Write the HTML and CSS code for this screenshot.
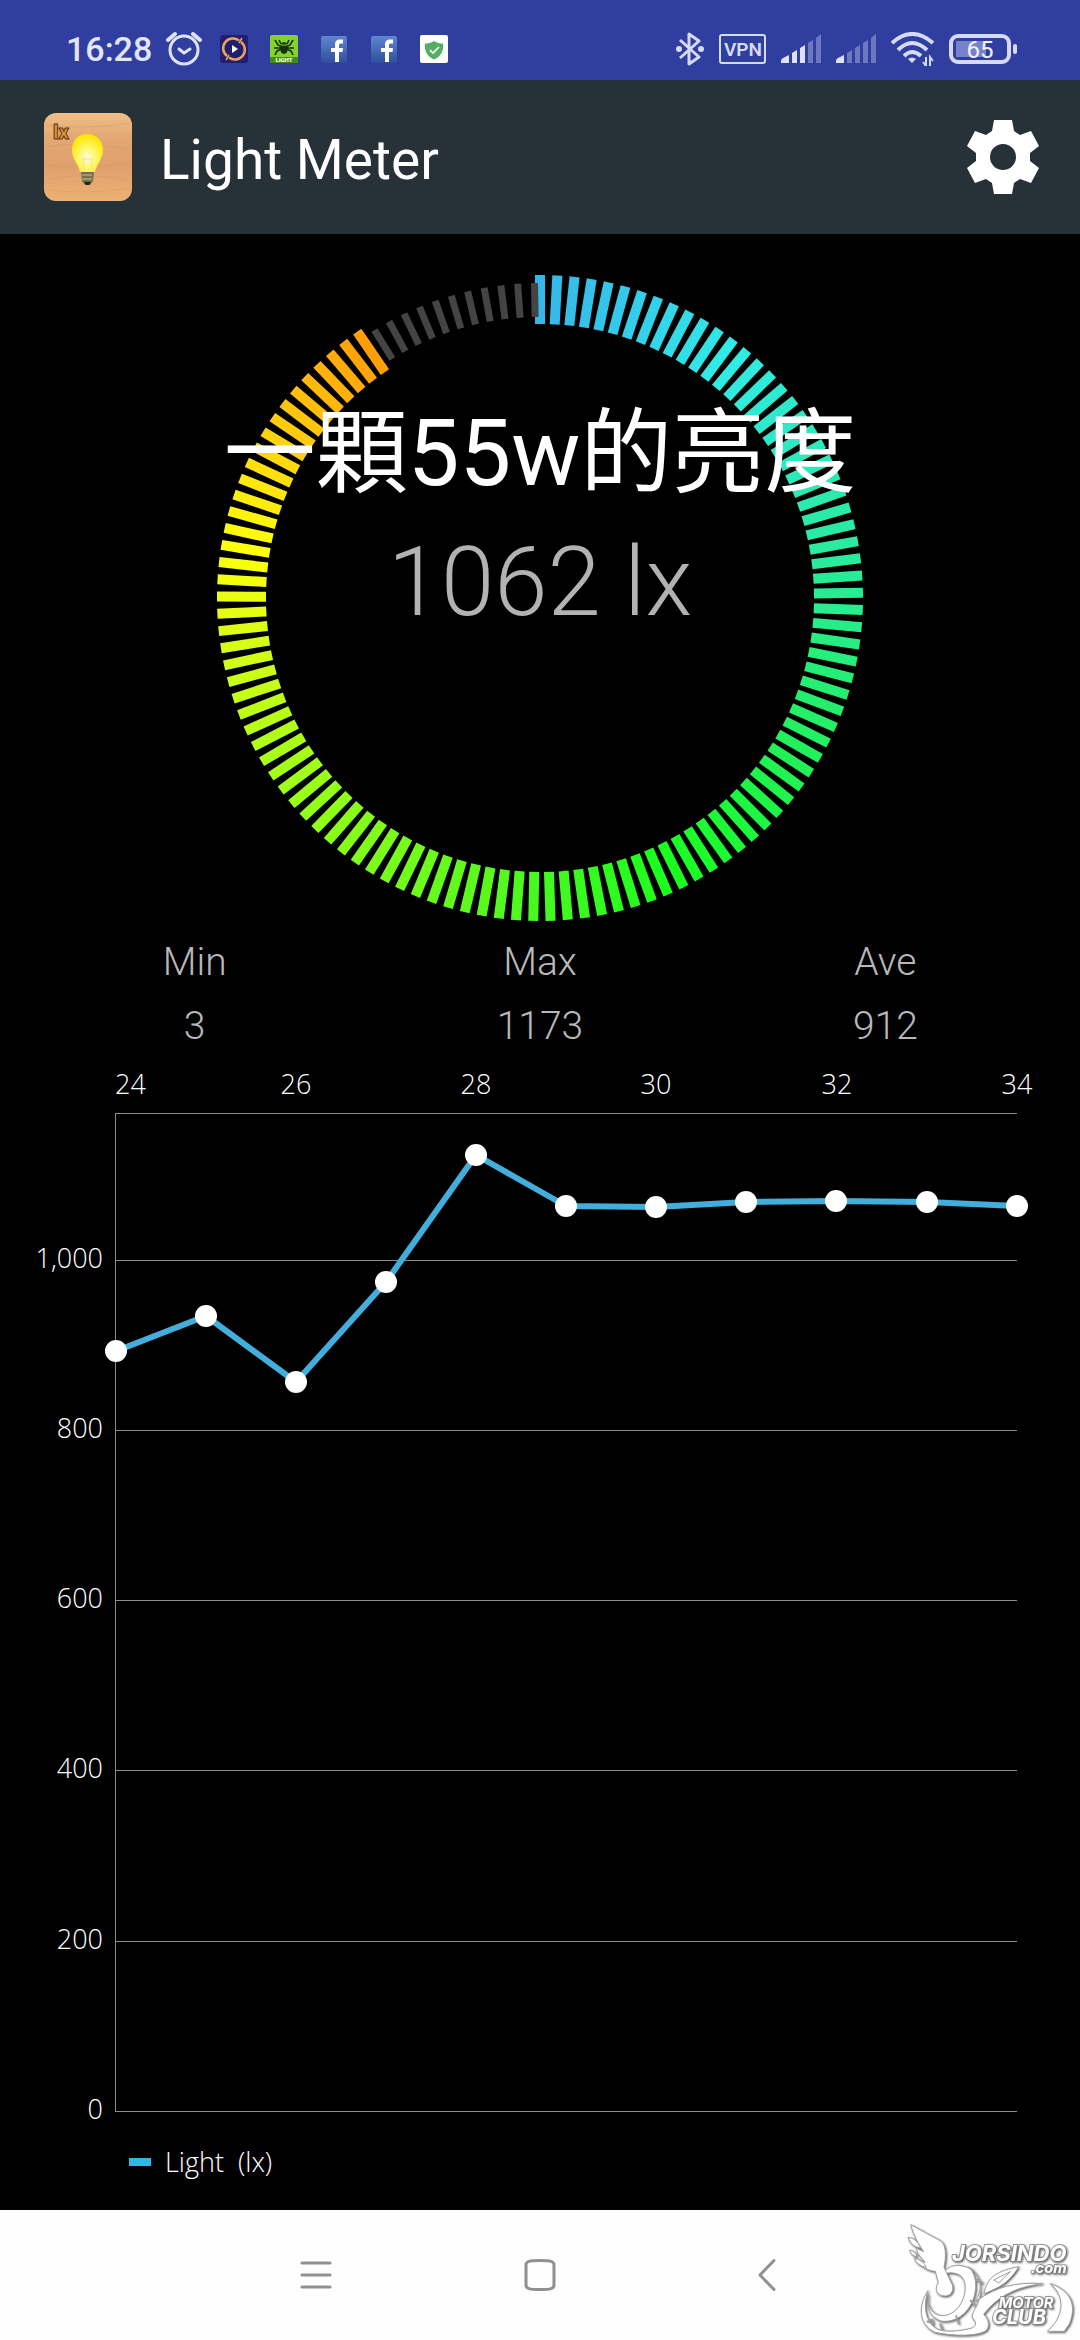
FILE: index.html
```html
<!DOCTYPE html>
<html lang="en">
<head>
<meta charset="utf-8">
<meta name="viewport" content="width=device-width, initial-scale=1">
<title>Light Meter</title>
<link rel="stylesheet" href="styles.css">
</head>
<body>
<div class="screen">
  <div class="status">
    <span class="clock">16:28</span>
    <svg class="alarm" viewBox="0 0 36 36" width="36" height="36" fill="none" stroke="#dfe2fb" stroke-width="3" stroke-linecap="round" stroke-linejoin="round">
      <circle cx="18" cy="19" r="14"/><path d="M13 18l5 4 6-4"/><path d="M2 9l7-6M34 9l-7-6" stroke-width="4"/>
    </svg>
    <div class="notices">
      <svg viewBox="0 0 28 28" width="28" height="28">
        <rect width="28" height="28" rx="3" fill="#22206e"/>
        <path d="M7 21A9.500 9.500 0 0 1 19 5.500M21 7A9.500 9.500 0 0 1 9 22.500" fill="none" stroke="#eda35c" stroke-width="2.500"/>
        <path d="M19 8l3-5M6 25l3-5" stroke="#eda35c" stroke-width="1.500"/><path d="M12 10l6 4-6 4z" fill="#fff"/>
      </svg>
      <svg viewBox="0 0 28 28" width="28" height="28">
        <rect width="28" height="28" rx="2" fill="#86d12d"/><path d="M0 22h28v4a2 2 0 0 1-2 2H2a2 2 0 0 1-2-2z" fill="#3f8c14"/>
        <path d="M12 12L8 10 5 5M16 12l4-2 3-5M12 13H4M16 13h8M12 14l-5 2-2 4M16 14l5 2 2 4M11 9L9 5M17 9l2-4" fill="none" stroke="#12330c" stroke-width="1.600"/>
        <ellipse cx="14" cy="13" rx="4" ry="6" fill="#12330c"/><path d="M11 10h6" stroke="#86d12d"/>
        <text x="14" y="27" class="tiny-label" text-anchor="middle">LIGHT</text>
      </svg>
      <svg viewBox="0 0 28 28" width="28" height="28">
        <defs><linearGradient id="fb" x1="0" y1="0" x2="0" y2="1"><stop offset="0" stop-color="#5f86d0"/><stop offset="1" stop-color="#2f4f9c"/></linearGradient></defs>
        <rect x="1" y="1" width="26" height="27" rx="2" fill="url(#fb)"/>
        <path d="M15 27V17h-4v-4h4v-3c0-4 2-5.500 5-5.500h3v4h-2c-1.500 0-2 .6-2 2V13h4l-.5 4H19v10z" fill="#fff"/>
      </svg>
      <svg viewBox="0 0 28 28" width="28" height="28">
        <rect x="1" y="1" width="26" height="27" rx="2" fill="url(#fb)"/>
        <path d="M15 27V17h-4v-4h4v-3c0-4 2-5.500 5-5.500h3v4h-2c-1.500 0-2 .6-2 2V13h4l-.5 4H19v10z" fill="#fff"/>
      </svg>
      <svg viewBox="0 0 28 28" width="28" height="28">
        <rect width="28" height="28" rx="2" fill="#fff"/>
        <path d="M14 6c3 2 6 2.500 9 2.500 1 7-2 13-9 16C7 21.500 4 15.500 5 8.500 8 8.500 11 8 14 6z" fill="#53ad62"/><path d="M10 15l3 3 6-6" fill="none" stroke="#fff" stroke-width="1.600"/>
      </svg>
    </div>
    <div class="signals">
      <svg viewBox="0 0 28 34" width="28" height="34" fill="none" stroke="#d5daf9" stroke-width="3" stroke-linejoin="round">
        <path d="M4 8l19 17-10 7V2l10 7L4 26"/><circle cx="3" cy="17" r="3" fill="#d5daf9" stroke="none"/><circle cx="25" cy="17" r="3" fill="#d5daf9" stroke="none"/>
      </svg>
      <svg viewBox="0 0 47 30" width="47" height="30">
        <rect x="1" y="1" width="45" height="28" rx="2" fill="none" stroke="#d5daf9" stroke-width="2"/><text x="24" y="22" class="vpn" text-anchor="middle">VPN</text>
      </svg>
      <svg viewBox="0 0 40 30" width="40" height="30" fill="#dde1fb">
        <path d="M0 29v-2q0-2 2-3l6-3v8zM11 29V19l5-3v13zM19 29V14l5-3v18z"/><path d="M27 29V9l5-3v23zM35 29V4l5-4v29z" opacity=".35"/>
      </svg>
      <svg viewBox="0 0 40 30" width="40" height="30" fill="#dde1fb">
        <path d="M0 29v-2q0-2 2-3l6-3v8z"/><path d="M11 29V19l5-3v13zM19 29V14l5-3v18zM27 29V9l5-3v23zM35 29V4l5-4v29z" opacity=".35"/>
      </svg>
      <svg viewBox="0 0 43 34" width="43" height="34" fill="none" stroke="#d5daf9" stroke-width="4">
        <path d="M1 11Q21-7 42 11M7 18Q21 4 36 18M13 24q8-8 17 0"/><path d="M17 27q4-3 8 0l-4 4z" fill="#d5daf9" stroke="none"/>
        <path d="M35 25v9l-3-4M39 34v-9l3 4" stroke-width="2"/>
      </svg>
      <svg viewBox="0 0 68 30" width="68" height="30">
        <rect x="7" y="7" width="30" height="16" fill="#7882ca"/><rect x="2" y="2" width="58" height="26" rx="7" fill="none" stroke="#d5daf9" stroke-width="4"/>
        <rect x="64" y="10" width="4" height="10" rx="2" fill="#d5daf9"/><text x="31" y="24" class="charge" text-anchor="middle">65</text>
      </svg>
    </div>
  </div>

  <header class="appbar">
    <svg class="logo" viewBox="0 0 88 88" width="88" height="88">
      <defs>
        <linearGradient id="wood" x1="0" y1="0" x2="0" y2="1"><stop offset="0" stop-color="#f0bd88"/><stop offset=".3" stop-color="#e2a772"/><stop offset=".6" stop-color="#e0a06d"/><stop offset="1" stop-color="#ecb174"/></linearGradient>
        <radialGradient id="glow" cx=".5" cy=".62" r=".6"><stop offset="0" stop-color="#fffce0"/><stop offset=".45" stop-color="#fff86a"/><stop offset="1" stop-color="#ffe600"/></radialGradient>
      </defs>
      <rect width="88" height="88" rx="12" fill="url(#wood)"/>
      <path d="M3 12q40 5 82-2M2 34q30-6 84 2M2 52q50 5 84-3M3 66q40-7 82 1M4 77q40 5 80-2" fill="none" stroke="#cf8d57" opacity=".3"/>
      <text x="9" y="26" class="logo-text">lx</text>
      <path d="M43 21c11 0 16 8 16 16 0 9-6 13-8 22H36c-2-9-8-13-8-22 0-8 5-16 15-16z" fill="url(#glow)"/>
      <path d="M40 56l-1-11 3 2 2-2 2 2 2-2-1 11" fill="none" stroke="#eee0a0"/>
      <path d="M37 59h13l-1 9-3 4h-5l-3-4z" fill="#74704c"/><path d="M38 62h10M38 66h10" stroke="#c7c296" stroke-width="1"/><path d="M40 69h7l-2 3h-3z" fill="#222"/>
    </svg>
    <h1 class="title">Light Meter</h1>
    <button class="settings" type="button" aria-label="Settings">
      <svg viewBox="-37 -37 74 74" width="74" height="74">
        <path fill="#fff" fill-rule="evenodd" d="M-9-37H9L11-26 17-22 28-26 36-11 27-4V4L36 11 28 26 17 22 11 26 9 37H-9L-11 26-17 22-28 26-36 11-27 4V-4L-36-11-28-26-17-22-11-26ZM13 0A13 13 0 1 0-13 0 13 13 0 1 0 13 0Z"/>
      </svg>
    </button>
  </header>

  <main class="meter">
    <section class="gauge">
      <svg class="ring" id="ring" viewBox="-324 -324 648 648" aria-hidden="true"></svg>
      <div class="readout">
        <p class="caption">一顆55w的亮度</p>
        <p class="reading">1062 lx</p>
      </div>
    </section>

    <dl class="stats">
      <div><dt>Min</dt><dd>3</dd></div>
      <div><dt>Max</dt><dd>1173</dd></div>
      <div><dt>Ave</dt><dd>912</dd></div>
    </dl>

    <svg class="chart" viewBox="0 0 1080 1152" role="img" aria-label="Light (lx)">
      <path class="grid" d="M115.500 55V1053.500M115 55.500H1017M115 202.500H1017M115 372.500H1017M115 542.500H1017M115 712.500H1017M115 883.500H1017M115 1053.500H1017"/>
      <g class="axis">
        <text x="115" y="36">24</text>
        <g text-anchor="middle">
          <text x="296" y="36">26</text><text x="476" y="36">28</text><text x="656" y="36">30</text>
          <text x="837" y="36">32</text><text x="1017" y="36">34</text>
        </g>
        <g text-anchor="end">
          <text x="103" y="210">1,000</text><text x="103" y="380">800</text><text x="103" y="550">600</text>
          <text x="103" y="720">400</text><text x="103" y="891">200</text><text x="103" y="1061">0</text>
        </g>
      </g>
      <polyline class="series" points="116,293 206,258 296,324 386,224 476,97 566,148 656,149 746,144 836,143 927,144 1017,148"/>
      <g fill="#fff">
        <circle cx="116" cy="293" r="11"/><circle cx="206" cy="258" r="11"/><circle cx="296" cy="324" r="11"/><circle cx="386" cy="224" r="11"/>
        <circle cx="476" cy="97" r="11"/><circle cx="566" cy="148" r="11"/><circle cx="656" cy="149" r="11"/><circle cx="746" cy="144" r="11"/>
        <circle cx="836" cy="143" r="11"/><circle cx="927" cy="144" r="11"/><circle cx="1017" cy="148" r="11"/>
      </g>
      <rect x="129" y="1100" width="22" height="8" fill="#33b5e5"/>
      <text class="axis legend" x="165" y="1114">Light  (lx)</text>
    </svg>
  </main>

  <nav class="navbar">
    <button type="button" aria-label="Recent apps"><svg viewBox="0 0 34 34" width="34" height="34"><path d="M3 5h28M3 17h28M3 29h28"/></svg></button>
    <button type="button" aria-label="Home"><svg viewBox="0 0 34 34" width="34" height="34"><path d="M17 2.500c11 0 14 1 14 4.500v20c0 3.500-3 4.500-14 4.500S3 30.500 3 27V7c0-3.500 3-4.500 14-4.500z"/></svg></button>
    <button type="button" aria-label="Back"><svg viewBox="0 0 34 34" width="34" height="34"><path d="M27 2.500L13 17l14 14.500"/></svg></button>
    <svg class="watermark" viewBox="0 0 600 420" width="200" height="140">
      <g fill="#fff" stroke="#a0a0a0" stroke-width="3" stroke-linejoin="round">
        <path d="M144 272C112 320 118 375 165 397c55 12 125 12 152-4 15-14 8-36-6-50 35-45 85-82 178-92-85-6-140 12-190 45l-14 8c30-40 17-88-26-103-34-12-60 0-68 20 30-7 58-1 64 30 6 50-28 96-68 96-34 0-49-38-40-62-8 30 0 66 36 78 55 8 100-40 104-100 2-30-10-54-22-62 32 18 44 52 34 92-8 35-30 48-20 62 12 14 10 24-6 30-40 10-80 12-102 2-36-22-42-70-27-115z"/>
        <path d="M92 74l92 50c18 16 12 60 8 78l26 55c3 27-14 33-30 30-20-3-24-23-13-39l-9-34c-25-2-44-16-54-34l24 7c-15-16-25-28-26-42l21 10c-15-22-29-47-39-81z"/>
        <path d="M84 112q27 3 38 32-29-4-38-32zM89 150q18 4 22 20-17-2-22-20zM103 174q28 8 36 28-27-4-36-28z"/>
        <path d="M312 282c8-52 43-70 104-82-14 24-38 53-72 67zM341 240l50-25-35 34z"/>
        <path d="M510 250c61 23 82 62 58 122l-15 22h-51c42-36 63-97 8-144z"/>
        <path d="M142 365l14-6 4 12zM180 370l8 20M228 346l9 26M270 300l19 20M290 238l19 12" fill="none" stroke-width="6"/>
      </g>
      <g class="watermark-text"><text x="216" y="182" class="mark-large">JORSINDO</text><text x="452" y="218" class="mark-small">.com</text><text x="356" y="323" class="mark-small">MOTOR</text><text x="336" y="373" class="mark-mid">CLUB</text></g>
    </svg>
  </nav>
</div>
<script src="gauge.js"></script>
</body>
</html>
```
FILE: styles.css
```css
* { box-sizing: border-box; }
body { margin: 0; background: #000; font-family: Roboto, "Noto Sans CJK TC", sans-serif; }
h1, p, dl, dd { margin: 0; }
svg { display: block; flex: none; }
button { padding: 0; border: 0; background: none; cursor: pointer; }
.screen { display: flex; flex-direction: column; min-height: 100vh; }

.status { display: flex; align-items: center; height: 80px; padding: 18px 63px 0 66px; background: #303f9f; color: #e4e6fd; }
.clock { font-size: 34px; line-height: 40px; font-weight: 500; }
.alarm { margin-left: 14px; }
.notices { display: flex; gap: 22px; margin-left: 18px; }
.signals { display: flex; align-items: center; gap: 15px; margin-left: auto; }
.tiny-label { font-size: 6px; font-weight: 900; fill: #fff; }
.vpn { font-size: 19px; font-weight: 600; fill: #d5daf9; }
.charge { font-size: 24px; fill: #f2f3ff; }

.appbar { display: flex; align-items: center; height: 154px; padding: 0 40px 0 44px; background: #263238; }
.title { flex: 1; margin-left: 28px; padding-top: 6px; color: #fff; font-size: 55px; line-height: 64px; font-weight: 400; }
.logo-text { font-size: 20px; font-weight: 900; fill: #e2923a; stroke: #5c3510; stroke-width: 1px; }

.meter { flex: 1; }
.gauge { display: grid; justify-items: center; padding-top: 40px; }
.ring, .readout { grid-area: 1 / 1; }
.ring { width: 60%; }
.readout { padding-top: 120px; text-align: center; }
.caption { margin-bottom: 8px; color: #fff; font-size: 92px; line-height: 120px; }
.reading { color: #b2b2b2; font-size: 96px; line-height: 120px; font-weight: 300; }

.stats { display: grid; grid-template-columns: repeat(3, 1fr); padding: 8px 22px 0; color: #b8b8b8; font-size: 39px; line-height: 64px; font-weight: 300; text-align: center; }

.chart { width: 100%; }
.grid { fill: none; stroke: #8c8c8c; stroke-width: 1px; }
.axis { fill: #fff; font-family: "Open Sans", "Noto Sans", sans-serif; font-size: 27px; font-weight: 300; }
.legend { white-space: pre; }
.series { fill: none; stroke: #42aedc; stroke-width: 6px; stroke-linejoin: round; }

.navbar { position: relative; display: grid; grid-template-columns: repeat(3, 224px); justify-content: center; height: 130px; background: #fefefe; }
.navbar button { display: grid; place-items: center; }
.navbar button path { fill: none; stroke: #909090; stroke-width: 3px; stroke-linecap: round; stroke-linejoin: round; }
.watermark { position: absolute; right: 0; bottom: 0; pointer-events: none; filter: drop-shadow(1px 1px 1px #555); }
.watermark-text { fill: #fff; stroke: #858585; stroke-width: 5px; paint-order: stroke; font-family: Inter, sans-serif; font-style: italic; font-weight: 700; }
.mark-large { font-size: 66px; }
.mark-mid { font-size: 60px; }
.mark-small { font-size: 44px; }
```
FILE: gauge.js
```js
// Ring of ticks: 16 units from tick to tick, measured on the middle radius.
const ring = document.getElementById("ring");
const STEP = (16 / 298.5) * (180 / Math.PI);

// Colour stops of the sweep, by angle in degrees clockwise from the top.
const stops = [
  [0, 55, 182, 232], [18, 52, 204, 234], [38, 48, 236, 230], [60, 46, 232, 190],
  [90, 40, 236, 145], [120, 34, 240, 92], [155, 26, 255, 30], [180, 72, 248, 32],
  [230, 152, 255, 24], [258, 208, 252, 24], [280, 255, 255, 10],
  [300, 255, 212, 14], [326, 255, 158, 8]
];

function colourAt(angle) {
  const i = Math.max(1, stops.findIndex(s => s[0] >= angle));
  const [a, b] = [stops[i - 1], stops[i]];
  const t = Math.max(0, (angle - a[0]) / (b[0] - a[0]));
  return "rgb(" + [1, 2, 3].map(n => Math.round(a[n] + (b[n] - a[n]) * t)).join(",") + ")";
}

function tick(angle, width, outer, length, fill) {
  const r = document.createElementNS("http://www.w3.org/2000/svg", "rect");
  r.setAttribute("x", -width / 2);
  r.setAttribute("y", -outer);
  r.setAttribute("width", width);
  r.setAttribute("height", length);
  r.setAttribute("fill", fill);
  r.setAttribute("transform", "rotate(" + angle + ")");
  ring.appendChild(r);
}

for (let k = 0; k < 107; k++) tick(k * STEP, 10, 323, 49, colourAt(k * STEP));
for (let k = 0; k < 11; k++) tick(-1 - k * STEP, 7, 315, 34, "#444");
```
